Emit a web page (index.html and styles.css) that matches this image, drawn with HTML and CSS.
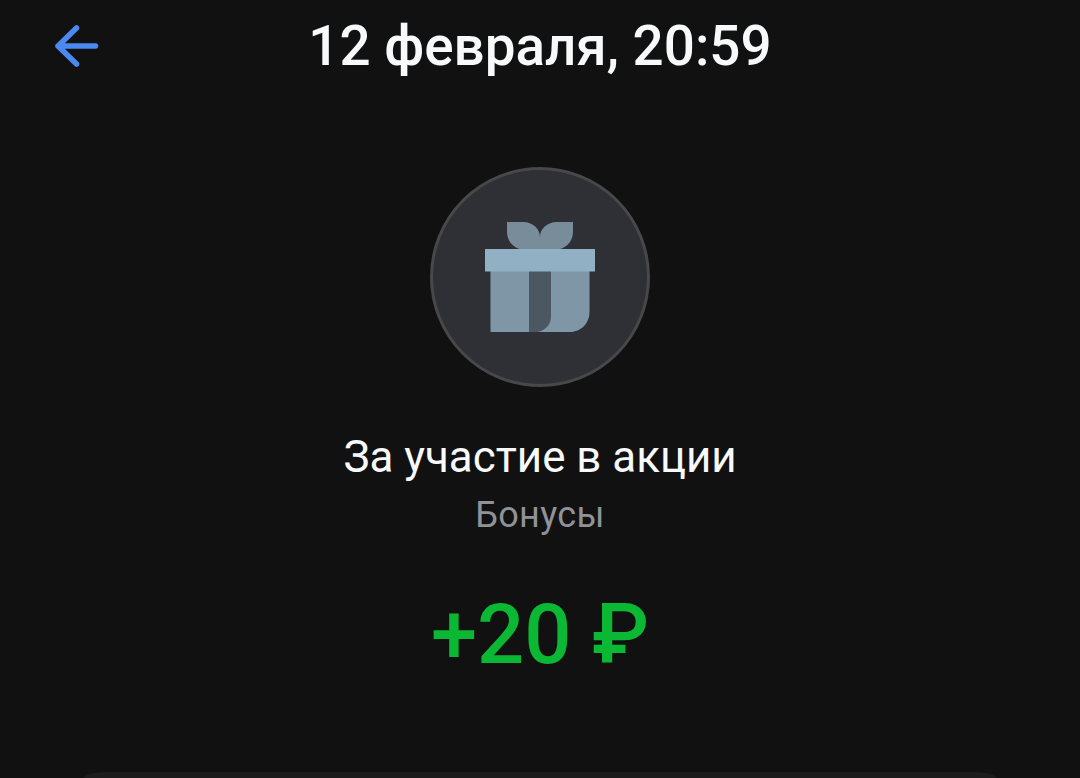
FILE: index.html
```html
<!DOCTYPE html>
<html lang="ru">
<head>
    <meta charset="UTF-8">
    <title>12 февраля, 20:59</title>
    <link rel="stylesheet" href="styles.css">
</head>
<body>

<header class="topbar">
    <a class="back" href="#" aria-label="Назад">
        <svg width="46" height="44" viewBox="0 0 46 44">
            <path d="M22.500 4L4 22L22.500 40M4 22H41.500" />
        </svg>
    </a>
    <h1 class="title">12 февраля, 20:59</h1>
</header>

<main class="operation">
    <div class="avatar">
        <!-- gift -->
        <svg width="110" height="112" viewBox="0 0 110 112">
            <path fill="#788c9a" d="M22 1H38C48 1 55 8 55 16C55 8 62 1 72 1H88V11C88 21 80 28.500 71 28.500H39C30 28.500 22 21 22 11Z" />
            <path fill="#7f96a6" d="M5.500 50H104.500V91C104.500 102 96 111 85 111H5.500Z" />
            <path fill="#4b5861" d="M44 50H66V96C66 104 59 111 51 111H44Z" />
            <rect fill="#92b0c4" y="28" width="110" height="22.500" />
        </svg>
    </div>
    <h2 class="name">За участие в акции</h2>
    <p class="category">Бонусы</p>
    <p class="amount">+20 ₽</p>
</main>

<section class="card"></section>

</body>
</html>
```
FILE: styles.css
```css
body {
    margin: 0;
    background-color: #111111;
    color: #f8f9fa;
    font-family: Roboto, sans-serif;
}

h1, h2, p {
    margin: 0;
}

.topbar {
    display: grid;
    grid-template-columns: 160px 1fr 160px;
    align-items: center;
    height: 92px;
}

.back {
    display: flex;
    padding-left: 54px;
}

.back path {
    fill: none;
    stroke: #4a8af0;
    stroke-width: 5.5;
    stroke-linecap: round;
    stroke-linejoin: round;
}

.title {
    font-size: 54.8px;
    font-weight: 500;
    line-height: 92px;
    text-align: center;
    white-space: nowrap;
}

.operation {
    display: flex;
    flex-direction: column;
    align-items: center;
    padding-top: 75px;
}

.avatar {
    display: flex;
    align-items: center;
    justify-content: center;
    box-sizing: border-box;
    width: 220px;
    height: 220px;
    border: 3px solid #48484a;
    border-radius: 50%;
    background-color: #2f3035;
}

.name {
    margin-top: 42px;
    font-size: 43.9px;
    font-weight: 400;
    line-height: 56px;
}

.category {
    margin-top: 8px;
    color: #8f9399;
    font-size: 36px;
    line-height: 44px;
    letter-spacing: 0.3px;
}

.amount {
    margin-top: 50px;
    color: #0ab833;
    font-size: 83px;
    font-weight: 500;
    line-height: 96px;
}

/* only the top edge of the card is on screen */
.card {
    height: 6px;
    margin: 89px 84px 0;
    border-radius: 22px 22px 0 0 / 6px 6px 0 0;
    background-color: #1c1c1c;
}
```
